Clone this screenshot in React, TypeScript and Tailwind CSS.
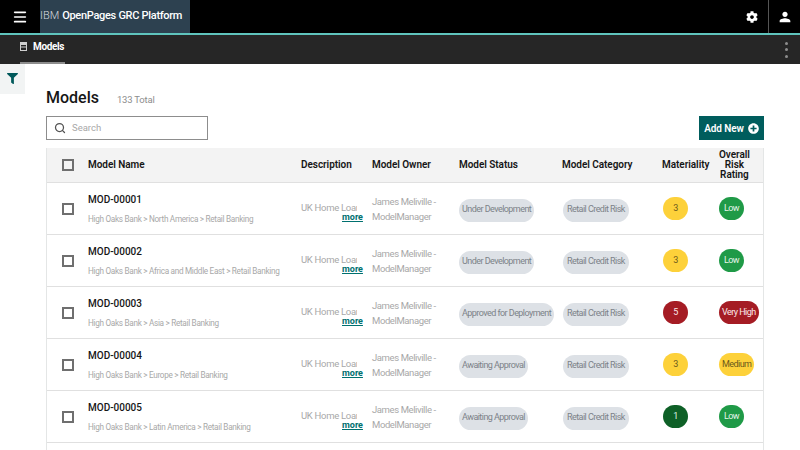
import { Menu, Search } from "lucide-react";
import { FaCog, FaFilter, FaPlusCircle } from "react-icons/fa";
import { MdPerson } from "react-icons/md";

type Model = {
  id: string;
  path: string;
  status: string;
  mat: string;
  matClass: string;
  risk: string;
  riskClass: string;
};

const yellow = "bg-[#fdd13a] text-[#6b5a1c]";
const green = "bg-[#1f9a47] text-[#e6f4ea]";
const red = "bg-[#a51c24] text-[#fbe9ea]";
const darkGreen = "bg-[#0e6027] text-[#dff2e4]";

const models: Model[] = [
  { id: "MOD-00001", path: "High Oaks Bank > North America > Retail Banking", status: "Under Development", mat: "3", matClass: yellow, risk: "Low", riskClass: green },
  { id: "MOD-00002", path: "High Oaks Bank > Africa and Middle East > Retail Banking", status: "Under Development", mat: "3", matClass: yellow, risk: "Low", riskClass: green },
  { id: "MOD-00003", path: "High Oaks Bank > Asia > Retail Banking", status: "Approved for Deployment", mat: "5", matClass: red, risk: "Very High", riskClass: red },
  { id: "MOD-00004", path: "High Oaks Bank > Europe > Retail Banking", status: "Awaiting Approval", mat: "3", matClass: yellow, risk: "Medium", riskClass: yellow },
  { id: "MOD-00005", path: "High Oaks Bank > Latin America > Retail Banking", status: "Awaiting Approval", mat: "1", matClass: darkGreen, risk: "Low", riskClass: green },
];

const cols = "grid grid-cols-[41px_213px_71px_87px_103px_100px_101px] items-center";

function Checkbox() {
  return <div className="ml-[15px] h-[8px] w-[8px] box-content border-2 border-[#6f6f6f]" />;
}

function Pill({ children, className }: { children: React.ReactNode; className: string }) {
  return (
    <span className={`inline-flex h-[23px] items-center justify-center whitespace-nowrap rounded-[12px] text-[9px] tracking-[-0.55px] ${className}`}>
      {children}
    </span>
  );
}

export default function App() {
  return (
    <div className="h-screen overflow-hidden bg-white font-['Roboto','Liberation_Sans',sans-serif] text-[#161616]">
      {/* Top bar */}
      <header className="flex h-[35px] items-stretch border-b-2 border-[#5fc4bd] bg-black text-white">
        <div className="flex w-[40px] items-center justify-center">
          <Menu size={16} strokeWidth={2.5} />
        </div>
        <div className="flex w-[150px] items-center whitespace-nowrap bg-[#2d4150] text-[11px]">
          <span className="font-light text-[#d5dade]">IBM</span>
          <span className="ml-[3px] font-medium tracking-[-0.3px]">OpenPages GRC Platform</span>
        </div>
        <div className="flex-1" />
        <div className="flex w-[31px] items-center justify-center pr-[1px]">
          <FaCog size={12} />
        </div>
        <div className="flex w-[32px] items-center justify-center border-l border-[#555]">
          <MdPerson size={16} />
        </div>
      </header>

      {/* Tabs */}
      <nav className="flex h-[29px] items-stretch justify-between bg-[#262626] text-white">
        <div className="ml-[20px] flex w-[45px] items-center gap-[6px] border-b-2 border-[#8d8d8d] pb-[4px]">
          <svg width="7" height="9" viewBox="0 0 7 9" className="shrink-0 text-[#d0d0d0]">
            <path d="M0 0h7v9H0z M1 3v1.5h5V3z M1 5.5V8h5V5.5z" fill="currentColor" fillRule="evenodd" />
          </svg>
          <span className="text-[10px] font-bold tracking-[-0.35px]">Models</span>
        </div>
        <div className="flex flex-col items-center justify-center gap-[3.5px] pr-[12px]">
          <span className="h-[3px] w-[3px] rounded-full bg-[#8d8d8d]" />
          <span className="h-[3px] w-[3px] rounded-full bg-[#8d8d8d]" />
          <span className="h-[3px] w-[3px] rounded-full bg-[#8d8d8d]" />
        </div>
      </nav>

      <div className="relative">
        <div className="absolute left-0 top-0 flex h-[30px] w-[25px] items-center justify-center bg-[#f2f4f4]">
          <FaFilter size={11} className="mb-[2px] text-[#00595b]" />
        </div>

        <main className="pl-[46px] pr-[36px]">
          <div className="flex h-[52px] items-end pb-[6px]">
            <h1 className="text-[16px] font-medium leading-[24px]">Models</h1>
            <span className="ml-[18px] text-[9.5px] leading-[20px] tracking-[-0.2px] text-[#8d8d8d]">133 Total</span>
          </div>

          <div className="flex items-center justify-between">
            <div className="flex h-[24px] w-[162px] items-center border border-[#8d8d8d] pl-[7px]">
              <Search size={12} strokeWidth={2.5} className="text-[#525252]" />
              <span className="ml-[6px] text-[9.5px] text-[#a8a8a8]">Search</span>
            </div>
            <button className="flex h-[24px] w-[65px] items-center justify-center gap-[4px] bg-[#005d5d] text-[10px] font-semibold tracking-[-0.1px] text-white">
              Add New
              <FaPlusCircle size={11} />
            </button>
          </div>

          {/* Table */}
          <div className="mt-[8px] w-[718px] border-x border-[#e4e6e6]">
            <div className={`${cols} h-[35px] border-b border-[#e0e0e0] bg-[#f3f3f3] text-[10px] font-semibold leading-[10px] tracking-[-0.05px]`}>
              <Checkbox />
              <div>Model Name</div>
              <div>Description</div>
              <div>Model Owner</div>
              <div>Model Status</div>
              <div>Model Category</div>
              <div className="flex items-center">
                <span>Materiality</span>
                <span className="ml-[8px] w-[34px] text-center">Overall Risk Rating</span>
              </div>
            </div>

            {models.map((m) => (
              <div key={m.id} className={`${cols} h-[52px] border-b border-[#e0e0e0]`}>
                <Checkbox />
                <div className="whitespace-nowrap">
                  <div className="mb-[6px] text-[10px] font-medium leading-[14px]">{m.id}</div>
                  <div className="text-[8.2px] leading-[12px] tracking-[-0.3px] text-[#a8a8a8]">{m.path}</div>
                </div>
                <div className="relative whitespace-nowrap text-[9.5px] tracking-[-0.3px] text-[#a8a8a8]">
                  <div className="w-[56px] overflow-hidden">UK Home Loan</div>
                  <a className="absolute left-[41px] top-[10px] text-[9px] font-bold tracking-normal text-[#00706f] underline">more</a>
                </div>
                <div className="whitespace-nowrap text-[9.5px] leading-[15px] tracking-[-0.4px] text-[#a8a8a8]">
                  James Meliville -<br />ModelManager
                </div>
                <div>
                  <Pill className="bg-[#dde1e6] px-[3px] text-[#7c8288]">{m.status}</Pill>
                </div>
                <div>
                  <Pill className="ml-[1px] bg-[#dde1e6] px-[4px] text-[#7c8288]">Retail Credit Risk</Pill>
                </div>
                <div className="flex items-center">
                  <Pill className={`ml-[1px] w-[25px] ${m.matClass}`}>{m.mat}</Pill>
                  <Pill className={`ml-[31px] min-w-[25px] px-[3px] ${m.riskClass}`}>{m.risk}</Pill>
                </div>
              </div>
            ))}
            <div className="h-[52px]" />
          </div>
        </main>
      </div>
    </div>
  );
}
